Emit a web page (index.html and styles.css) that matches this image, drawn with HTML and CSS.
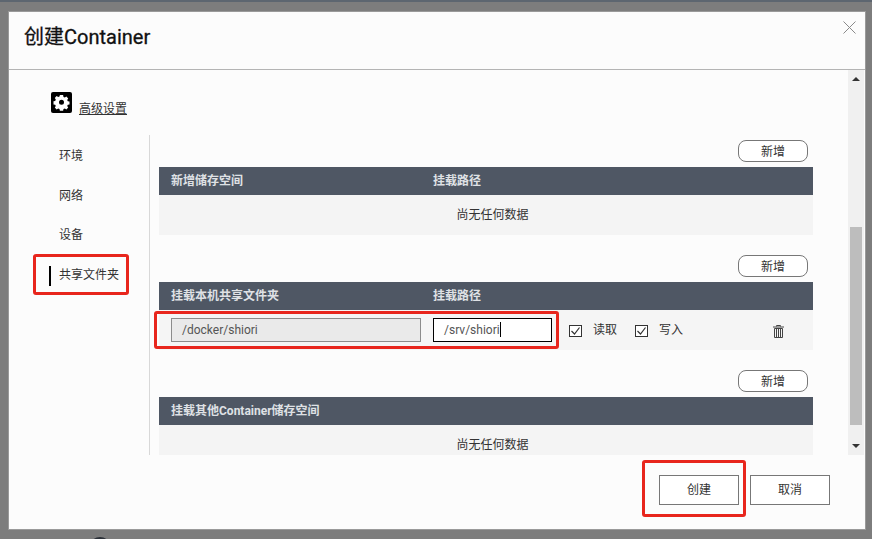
FILE: index.html
```html
<!DOCTYPE html>
<html lang="zh">
<head>
<meta charset="utf-8">
<title>创建Container</title>
<link rel="stylesheet" href="styles.css">
</head>
<body>
<div class="modal">
  <header class="head">
    <h1>创建Container</h1>
    <svg class="close" width="13" height="13" viewBox="0 0 13 13"><path d="M.5.5l12 12M12.5.5l-12 12" stroke="#8a8a8a" fill="none"/></svg>
  </header>
  <div class="scroll">
    <div class="main">
      <div class="adv">
        <svg class="gear" width="21" height="21" viewBox="0 0 21 21"><rect width="21" height="21" rx="2" fill="#000"/><path fill="#fff" fill-rule="evenodd" d="M8.9 3.5h3.2l.4 1.8 1.3.6 1.6-1 1.8 1.9-1 1.5.6 1.4 1.7.3v2.8l-1.7.3-.6 1.4 1 1.5-1.8 1.9-1.6-1-1.3.6-.4 1.7H8.9l-.4-1.7-1.3-.6-1.6 1-1.8-1.9 1-1.5-.6-1.4-1.7-.3V9.6l1.7-.3.6-1.4-1-1.5 1.8-1.9 1.6 1 1.3-.6zm1.6 4.6a2.5 2.5 0 1 0 0 5 2.5 2.5 0 0 0 0-5z" transform="translate(0 -.4)"/></svg>
        <a class="adv-link">高级设置</a>
      </div>
      <div class="cols">
        <nav class="side">
          <div class="nav-item">环境</div>
          <div class="nav-item">网络</div>
          <div class="nav-item">设备</div>
          <div class="nav-item active">共享文件夹</div>
        </nav>
        <div class="content">
          <section class="block">
            <div class="add-row"><button class="add">新增</button></div>
            <div class="thead"><span class="c1">新增储存空间</span><span>挂载路径</span></div>
            <div class="empty">尚无任何数据</div>
          </section>
          <section class="block">
            <div class="add-row"><button class="add">新增</button></div>
            <div class="thead"><span class="c1">挂载本机共享文件夹</span><span>挂载路径</span></div>
            <div class="row">
              <div class="field host">/docker/shiori</div>
              <div class="field mount">/srv/shiori<i class="caret"></i></div>
              <label class="chk first"><svg width="13" height="12" viewBox="0 0 13 12"><rect x=".5" y=".5" width="12" height="11" fill="#fff" stroke="#333"/><path d="M2.5 6l3 3 5-6.5" fill="none" stroke="#333" stroke-width="1.2"/></svg>读取</label>
              <label class="chk"><svg width="13" height="12" viewBox="0 0 13 12"><rect x=".5" y=".5" width="12" height="11" fill="#fff" stroke="#333"/><path d="M2.5 6l3 3 5-6.5" fill="none" stroke="#333" stroke-width="1.2"/></svg>写入</label>
              <svg class="trash" width="11" height="13" viewBox="0 0 11 13"><path d="M3.5 1.5V.5h4v1M0 2h11" fill="none" stroke="#444"/><path fill="none" stroke="#444" d="M1.5 3.5h8v9h-8zM3.5 4v8M5.5 4v8M7.5 4v8"/></svg>
            </div>
          </section>
          <section class="block">
            <div class="add-row"><button class="add">新增</button></div>
            <div class="thead"><span class="c1">挂载其他Container储存空间</span></div>
            <div class="empty">尚无任何数据</div>
          </section>
        </div>
      </div>
    </div>
    <div class="bar">
      <i class="arrow up"></i>
      <div class="track"><div class="thumb"></div></div>
      <i class="arrow down"></i>
    </div>
  </div>
  <footer class="foot">
    <button class="btn">创建</button>
    <button class="btn">取消</button>
  </footer>
  <div class="mark mark-nav"></div>
  <div class="mark mark-row"></div>
  <div class="mark mark-btn"></div>
</div>
<div class="behind-avatar"></div>
</body>
</html>
```
FILE: styles.css
```css
* { box-sizing: border-box; }
html, body { height: 100%; }
body {
  margin: 0;
  padding: 10px 0 0 9px;
  background: #7d7d7d;
  border-top: 2px solid #5d6670;
  overflow: hidden;
  position: relative;
  font: 12px/16px Roboto, "Noto Sans CJK SC", sans-serif;
  color: #333;
}
.behind-avatar {
  position: absolute;
  left: 89px;
  top: 535px;
  width: 22px;
  height: 22px;
  border-radius: 50%;
  background: #2b3038;
}
.modal {
  position: relative;
  width: 856px;
  height: 517px;
  background: #fcfcfc;
  display: flex;
  flex-direction: column;
  box-shadow: 0 0 0 1px #9a9a9a;
}
.head {
  position: relative;
  height: 58px;
  flex: none;
  border-bottom: 1px solid #b4b4b4;
  padding: 12px 15px;
}
.head h1 {
  margin: 0;
  font-size: 20px;
  line-height: 26px;
  font-weight: 400;
  color: #111;
  -webkit-text-stroke: 0.3px #111;
}
.close { position: absolute; top: 9px; right: 9px; }
.scroll { display: flex; height: 385px; flex: none; overflow: hidden; }
.main { flex: 1; min-width: 0; overflow: hidden; }
.adv { height: 65px; padding: 22px 0 0 42px; display: flex; align-items: flex-start; }
.gear { flex: none; }
.adv-link { margin: 9px 0 0 7px; text-decoration: underline; color: #333; }
.cols { display: flex; height: 320px; }
.side {
  width: 141px;
  flex: none;
  border-right: 1px solid #d8d8d8;
  padding-top: 2px;
}
.nav-item {
  height: 39.6px;
  line-height: 39.6px;
  padding-left: 50px;
  position: relative;
}
.nav-item.active::before {
  content: "";
  position: absolute;
  left: 40px;
  top: 10px;
  width: 2px;
  height: 20px;
  background: #000;
}
.content { width: 654px; margin-left: 9px; flex: none; padding-top: 5px; }
.block { height: 115px; }
.add-row { height: 27px; display: flex; justify-content: flex-end; padding-right: 5px; }
.add {
  width: 70px;
  height: 22px;
  padding: 2px 0 0;
  background: #fff;
  border: 1px solid #777;
  border-radius: 8px;
  font: inherit;
  color: #333;
}
.thead {
  height: 28px;
  background: #4f5764;
  color: #dfe1e5;
  font-weight: 700;
  line-height: 28px;
  display: flex;
  padding-left: 12px;
}
.c1 { width: 262px; flex: none; }
.empty { height: 40px; background: #f4f4f4; text-align: center; line-height: 40px; padding-left: 13px; }
.row {
  height: 40px;
  background: #f5f5f5;
  display: flex;
  align-items: center;
  padding-left: 12px;
}
.field { height: 24px; line-height: 22px; padding-left: 10px; color: #555; }
.host { width: 250px; background: #eaeaea; border: 1px solid #8c8c8c; }
.mount { width: 119px; margin-left: 12px; background: #fff; border: 1.5px solid #000; }
.caret { display: inline-block; width: 1px; height: 15px; background: #000; vertical-align: -3px; }
.chk { display: flex; align-items: center; gap: 11px; margin-left: 17px; width: 66px; }
.chk + .chk { margin-left: 0; }
.chk svg { position: relative; top: 1px; flex: none; }
.trash { margin-left: 72px; position: relative; top: 1px; }
.bar {
  width: 16px;
  flex: none;
  margin-right: 1px;
  background: #f0f0f0;
  display: flex;
  flex-direction: column;
  align-items: center;
}
.arrow { flex: none; width: 0; height: 0; margin: 7px 0 7px; border: 4px solid transparent; }
.arrow.up { border-top: 0; border-bottom: 4px solid #333; }
.arrow.down { border-bottom: 0; border-top: 4px solid #333; margin-top: 3px; }
.track { flex: 1; width: 100%; padding: 139px 2px 0; }
.thumb { height: 198px; background: #bdbdbd; }
.foot { flex: 1; display: flex; justify-content: flex-end; gap: 11px; padding: 20px 35px 0 0; }
.btn {
  width: 80px;
  height: 30px;
  padding: 0;
  background: #fff;
  border: 1px solid #777;
  font: inherit;
  color: #333;
}
.mark {
  position: absolute;
  border: 3px solid #e8261d;
  border-radius: 3px;
  pointer-events: none;
}
.mark-nav { left: 24px; top: 242px; width: 96px; height: 41px; }
.mark-row { left: 145px; top: 299px; width: 405px; height: 38px; }
.mark-btn { left: 633px; top: 448px; width: 104px; height: 57px; }
```
